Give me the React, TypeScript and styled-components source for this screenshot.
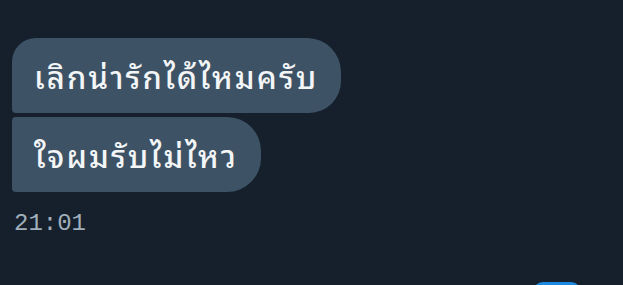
import React from "react";
import styled, { createGlobalStyle } from "styled-components";

const GlobalStyle = createGlobalStyle`
  html, body {
    margin: 0;
    padding: 0;
    background: #15202b;
  }
  body {
    width: 623px;
    height: 285px;
    overflow: hidden;
  }
`;

const Screen = styled.div`
  width: 623px;
  height: 285px;
  background: #16202c;
  padding: 38px 12px 0;
  box-sizing: border-box;
  position: relative;
  overflow: hidden;
`;

const Thread = styled.div`
  display: flex;
  flex-direction: column;
  align-items: flex-start;
  gap: 4px;
`;

const Bubble = styled.div<{ $first?: boolean }>`
  background: #3d5365;
  color: #f3f5f7;
  font-family: "Noto Sans Thai Looped", "Noto Sans Thai", "Noto Sans", sans-serif;
  font-size: 31px;
  font-weight: 500;
  letter-spacing: 2.1px;
  line-height: 75px;
  height: 75px;
  padding: 0 23px 0 22px;
  box-sizing: border-box;
  white-space: nowrap;
  border-radius: ${({ $first }) => ($first ? "24px 34px 32px 4px" : "4px 34px 34px 4px")};
`;

const Time = styled.div`
  margin: 18px 0 0 2px;
  font-family: "Liberation Mono", monospace;
  font-size: 24px;
  color: #a1afbb;
`;

const SendEdge = styled.div`
  position: absolute;
  left: 533px;
  bottom: -30px;
  width: 48px;
  height: 33px;
  border-radius: 10px;
  background: #1d8ae0;
`;

export default function App() {
  return (
    <>
      <GlobalStyle />
      <Screen>
        <Thread>
          <Bubble $first>เลิกน่ารักได้ไหมครับ</Bubble>
          <Bubble>ใจผมรับไม่ไหว</Bubble>
        </Thread>
        <Time>21:01</Time>
        <SendEdge />
      </Screen>
    </>
  );
}
